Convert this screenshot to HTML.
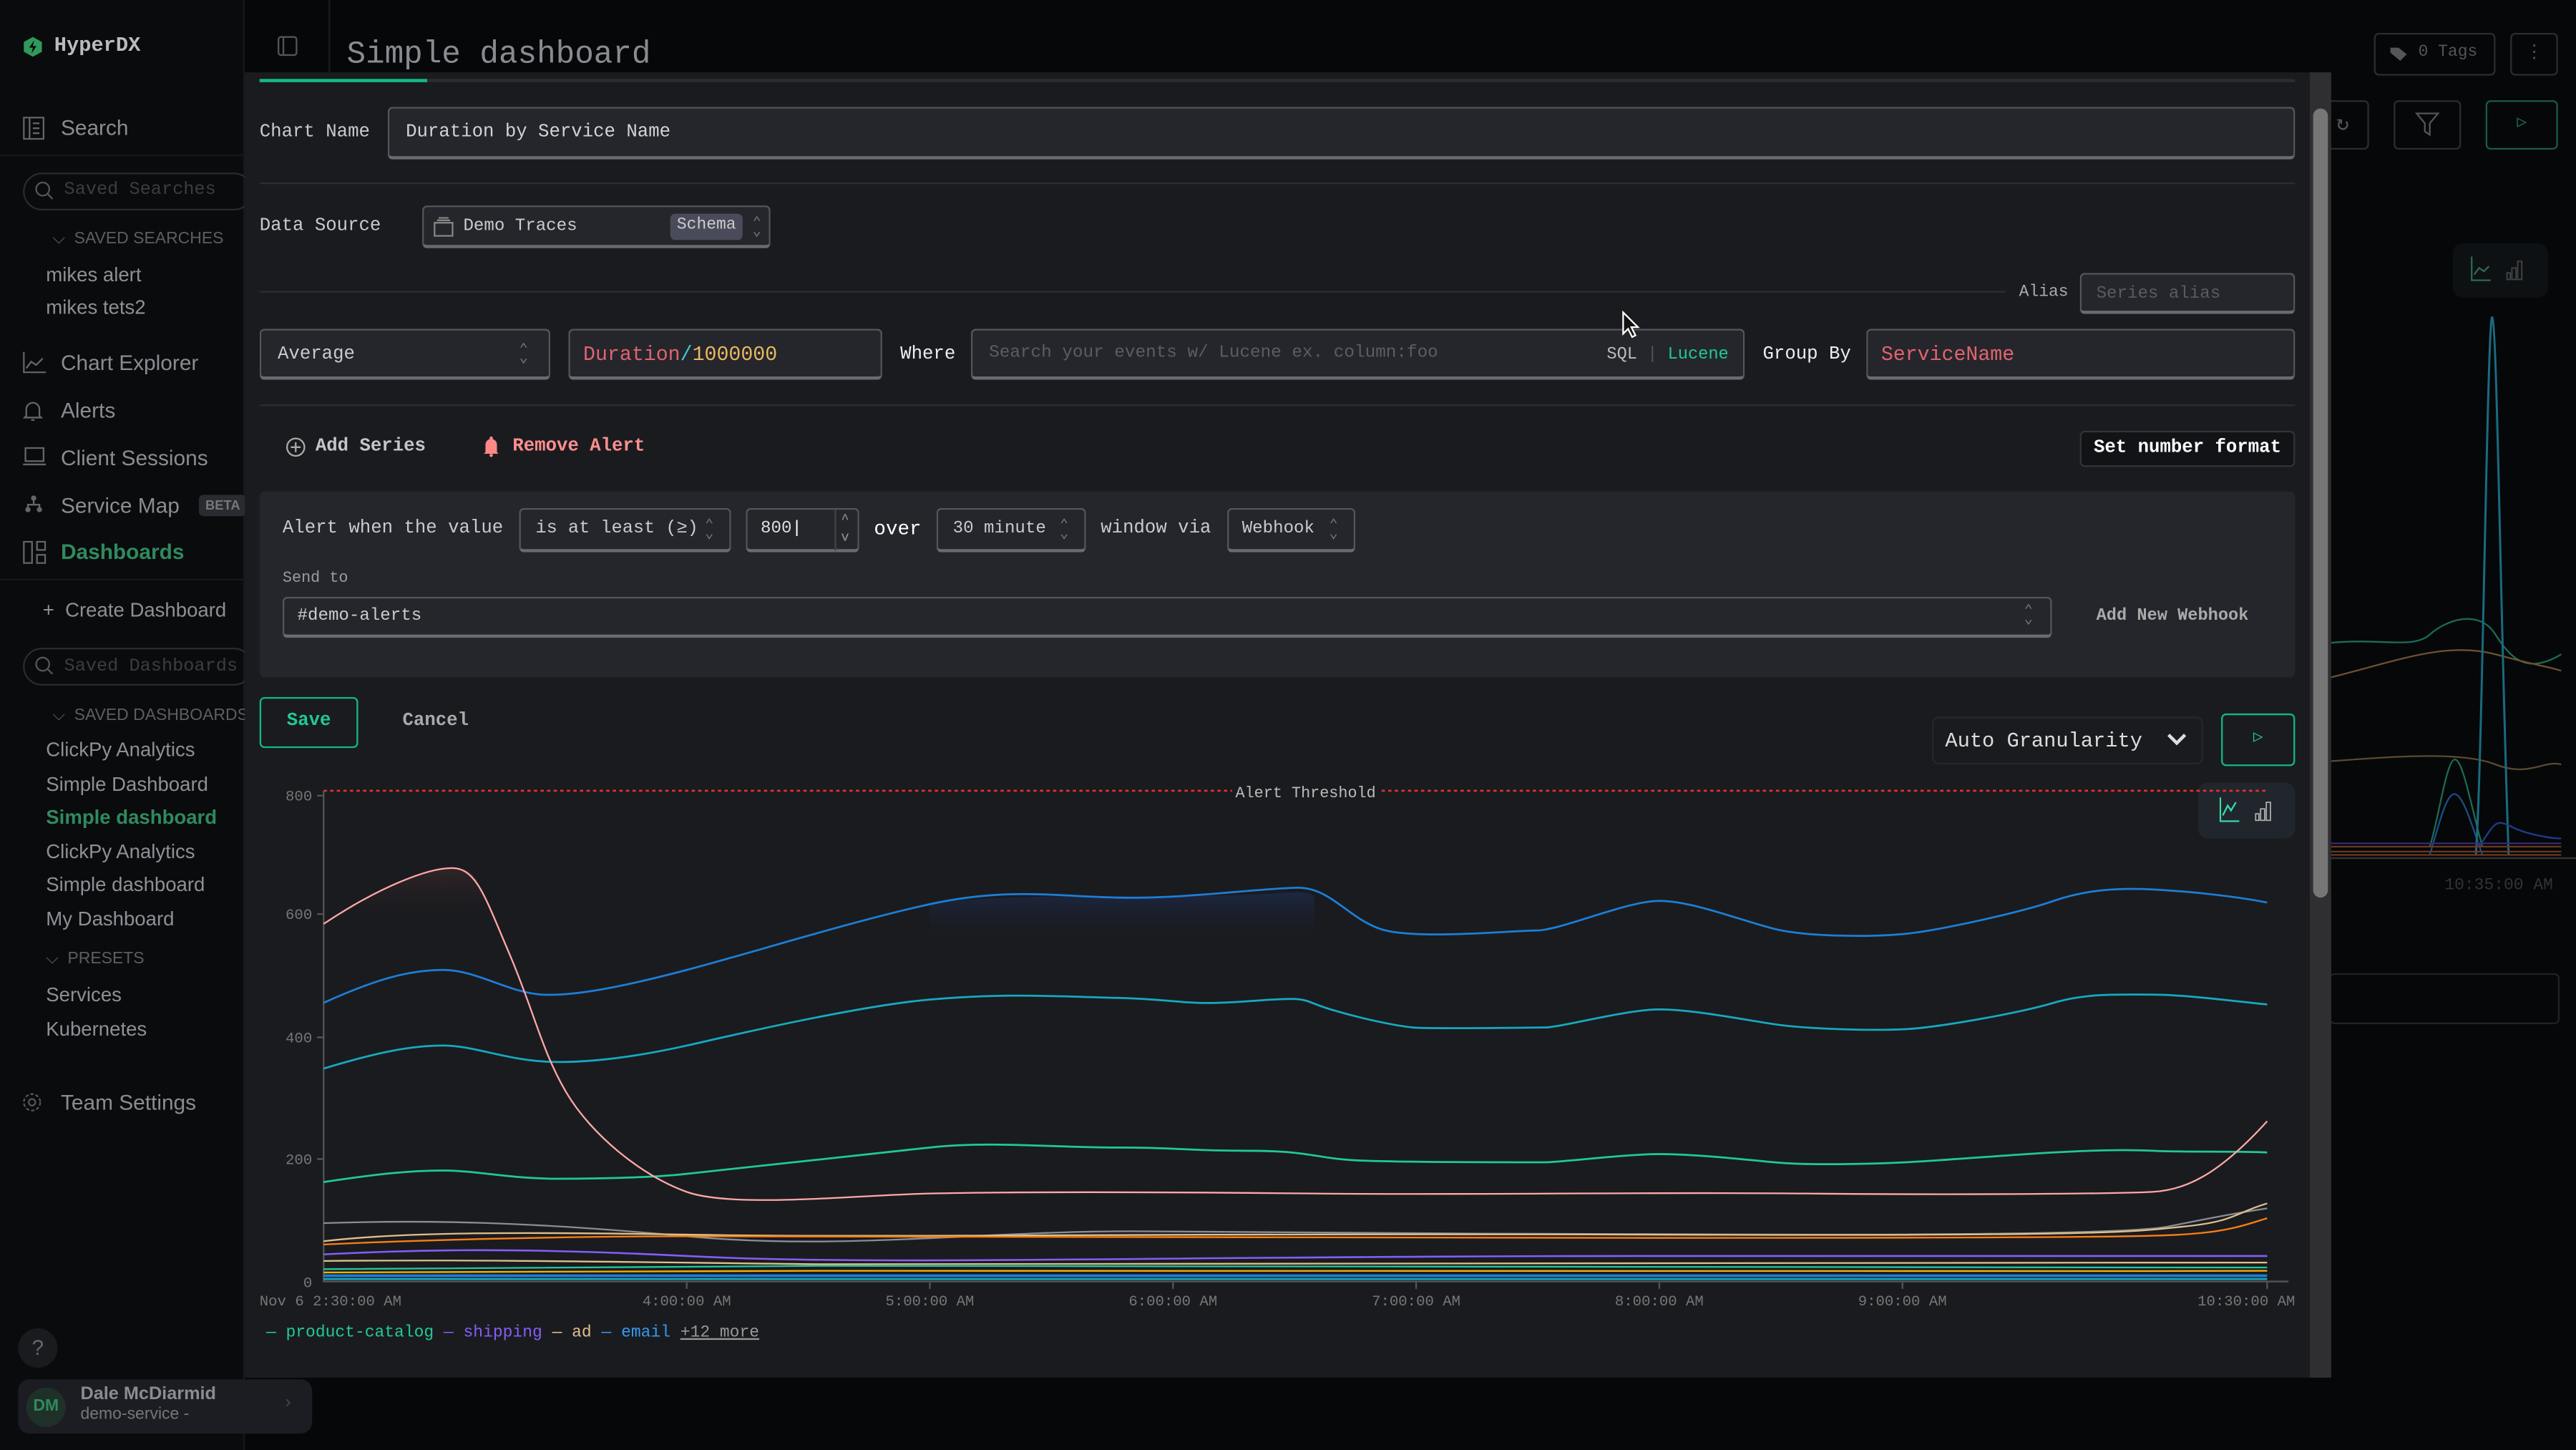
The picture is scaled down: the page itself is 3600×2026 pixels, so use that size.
<!DOCTYPE html>
<html><head><meta charset="utf-8">
<style>
*{box-sizing:border-box;margin:0;padding:0}
html,body{width:3600px;height:2026px;overflow:hidden;background:#050608}
#w{position:absolute;left:0;top:0;width:1568px;height:882px;transform:scale(2.29592,2.29705);transform-origin:0 0;background:#060709;font-family:"Liberation Mono",monospace;overflow:hidden}
.a{position:absolute;white-space:nowrap}
.inp{position:absolute;border:1px solid #55565c;border-bottom:2px solid #6a6b72;border-radius:3px;background:#25262b}
.lbl{color:#c9cacf;font-size:11.2px}
.nav{color:#8a8c92;font-size:13px;font-family:"Liberation Sans",sans-serif}
.sub{color:#8e9096;font-size:12px;font-family:"Liberation Sans",sans-serif}
.chev{color:#777;font-size:9px;line-height:5px}
</style></head><body><div id="w">
<!-- sidebar -->
<div class="a" style="left:0;top:0;width:149px;height:882px;background:#0a0b0d;border-right:1px solid #17181b"></div>
<div class="a" style="left:149px;top:0;width:52px;height:44px;background:#060709;border-right:1px solid #1b1c1f"></div>
<svg class="a" style="left:14px;top:22px" width="12" height="13" viewBox="0 0 12 13"><path d="M6 0.5L11.5 3.5V9.5L6 12.5L0.5 9.5V3.5Z" fill="#2f9a5a"/><path d="M6.8 2.5L3.8 7H6L5.2 10.5L8.2 6H6Z" fill="#0a0b0d"/></svg>
<div class="a" style="left:33px;top:21px;font-size:12.5px;font-weight:bold;color:#b9bbc0">HyperDX</div>
<div class="a" style="left:169px;top:22px;width:12px;height:12px;border:1px solid #555;border-radius:2px"></div>
<div class="a" style="left:172px;top:23px;width:1px;height:10px;background:#555"></div>
<svg class="a" style="left:14px;top:71px" width="13" height="14"><rect x="0.5" y="0.5" width="12" height="13" fill="none" stroke="#666"/><path d="M4 1V13M6 4H10M6 7H10M6 10H10" stroke="#666"/></svg>
<div class="a nav" style="left:37px;top:70px">Search</div>
<div class="a" style="left:0;top:94px;width:149px;height:1px;background:#17181b"></div>
<div class="a" style="left:14px;top:105px;width:140px;height:23px;border:1px solid #2a2b30;border-radius:12px"></div>
<svg class="a" style="left:21px;top:110px" width="12" height="12"><circle cx="5" cy="5" r="4" fill="none" stroke="#555"/><path d="M8 8L11 11" stroke="#555"/></svg>
<div class="a" style="left:39px;top:110px;color:#3c3d42;font-size:11px">Saved Searches</div>
<div class="a sub" style="left:32px;top:140px;font-size:10px;color:#5c5e63">⌵&nbsp; SAVED SEARCHES</div>
<div class="a sub" style="left:28px;top:160px">mikes alert</div>
<div class="a sub" style="left:28px;top:180px">mikes tets2</div>
<svg class="a" style="left:14px;top:214px" width="14" height="13"><path d="M0.5 0V12.5H14M2 10L5 6L8 8L12 4" fill="none" stroke="#666"/></svg>
<div class="a nav" style="left:37px;top:213px">Chart Explorer</div>
<svg class="a" style="left:14px;top:243px" width="12" height="14"><path d="M2 10V6A4 4 0 0 1 10 6V10L11 11H1Z M5 12.5H7" fill="none" stroke="#666"/></svg>
<div class="a nav" style="left:37px;top:242px">Alerts</div>
<svg class="a" style="left:14px;top:272px" width="14" height="12"><rect x="1.5" y="0.5" width="11" height="8" fill="none" stroke="#666"/><path d="M0 10.5H14" stroke="#666"/></svg>
<div class="a nav" style="left:37px;top:271px">Client Sessions</div>
<svg class="a" style="left:15px;top:301px" width="11" height="11"><circle cx="5.5" cy="2" r="1.6" fill="#666"/><circle cx="2" cy="9" r="1.6" fill="#666"/><circle cx="9" cy="9" r="1.6" fill="#666"/><path d="M5.5 3V6M2 8V6H9V8" stroke="#666" fill="none"/></svg>
<div class="a nav" style="left:37px;top:300px">Service Map</div>
<div class="a" style="left:121px;top:301px;background:#2a2b30;color:#777;font-size:8px;font-weight:bold;padding:2px 4px;border-radius:3px;font-family:'Liberation Sans'">BETA</div>
<svg class="a" style="left:14px;top:329px" width="14" height="14"><rect x="0.5" y="0.5" width="5" height="13" fill="none" stroke="#666"/><rect x="8.5" y="0.5" width="5" height="5" fill="none" stroke="#666"/><rect x="8.5" y="8.5" width="5" height="5" fill="none" stroke="#666"/></svg>
<div class="a nav" style="left:37px;top:328px;color:#2f8a5f;font-weight:bold">Dashboards</div>
<div class="a" style="left:0;top:352px;width:149px;height:1px;background:#17181b"></div>
<div class="a sub" style="left:26px;top:364px;color:#8e9096">+&nbsp; Create Dashboard</div>
<div class="a" style="left:14px;top:394px;width:140px;height:23px;border:1px solid #2a2b30;border-radius:12px"></div>
<svg class="a" style="left:21px;top:399px" width="12" height="12"><circle cx="5" cy="5" r="4" fill="none" stroke="#555"/><path d="M8 8L11 11" stroke="#555"/></svg>
<div class="a" style="left:39px;top:400px;color:#3c3d42;font-size:11px">Saved Dashboards</div>
<div class="a sub" style="left:32px;top:430px;font-size:10px;color:#5c5e63">⌵&nbsp; SAVED DASHBOARDS</div>
<div class="a sub" style="left:28px;top:449px">ClickPy Analytics</div>
<div class="a sub" style="left:28px;top:470px">Simple Dashboard</div>
<div class="a sub" style="left:28px;top:490px;color:#2f8a5f;font-weight:bold">Simple dashboard</div>
<div class="a sub" style="left:28px;top:511px">ClickPy Analytics</div>
<div class="a sub" style="left:28px;top:531px">Simple dashboard</div>
<div class="a sub" style="left:28px;top:552px">My Dashboard</div>
<div class="a sub" style="left:28px;top:578px;font-size:10px;color:#5c5e63">⌵&nbsp; PRESETS</div>
<div class="a sub" style="left:28px;top:598px">Services</div>
<div class="a sub" style="left:28px;top:619px">Kubernetes</div>
<svg class="a" style="left:13px;top:664px" width="13" height="13"><circle cx="6.5" cy="6.5" r="2" fill="none" stroke="#555"/><circle cx="6.5" cy="6.5" r="5" fill="none" stroke="#555" stroke-dasharray="2,1.2"/></svg>
<div class="a nav" style="left:37px;top:663px">Team Settings</div>
<div class="a" style="left:11px;top:808px;width:24px;height:24px;border-radius:12px;background:#1a1b1e;color:#666;font-size:13px;text-align:center;line-height:24px;font-family:'Liberation Sans'">?</div>
<div class="a" style="left:11px;top:839px;width:179px;height:33px;border-radius:7px;background:#1c1d22"></div>
<div class="a" style="left:16px;top:844px;width:24px;height:24px;border-radius:12px;background:#1f3028;color:#2f8a5f;font-size:10px;font-weight:bold;text-align:center;line-height:24px;font-family:'Liberation Sans'">DM</div>
<div class="a" style="left:49px;top:842px;color:#8a8c92;font-size:11px;font-weight:bold;font-family:'Liberation Sans'">Dale McDiarmid</div>
<div class="a" style="left:49px;top:855px;color:#777;font-size:10px;font-family:'Liberation Sans'">demo-service -</div>
<div class="a" style="left:172px;top:848px;color:#444;font-size:11px">›</div>
<!-- header -->
<div class="a" style="left:211px;top:22px;color:#8a8b90;font-size:19.3px">Simple dashboard</div>
<div class="a" style="left:1445px;top:20px;width:74px;height:26px;border:1px solid #2c2d31;border-radius:3px;color:#555;font-size:10px;line-height:24px;padding-left:26px">0 Tags</div>
<svg class="a" style="left:1454px;top:28px" width="12" height="10"><path d="M1 1H6L11 5L7 9L1 4Z" fill="#555"/></svg>
<div class="a" style="left:1528px;top:20px;width:29px;height:26px;border:1px solid #2c2d31;border-radius:3px;color:#555;font-size:11px;text-align:center;line-height:24px">⋮</div>
<div class="a" style="left:1410px;top:61px;width:32px;height:30px;border:1px solid #2c2d31;border-radius:3px;color:#555;text-align:center;line-height:28px;font-size:13px">↻</div>
<div class="a" style="left:1457px;top:61px;width:41px;height:30px;border:1px solid #2c2d31;border-radius:3px"></div>
<svg class="a" style="left:1470px;top:67px" width="16" height="18"><path d="M1 2H14L9 8V15L6 13V8Z" fill="none" stroke="#555"/></svg>
<div class="a" style="left:1513px;top:61px;width:44px;height:30px;border:1px solid #1b5a44;border-radius:3px;color:#1f7a5a;text-align:center;line-height:28px;font-size:10px">▷</div>
<!-- bg chart right -->
<div class="a" style="left:1493px;top:148px;width:58px;height:33px;border-radius:6px;background:#0e1113"></div>
<svg class="a" style="left:1504px;top:156px" width="36" height="16"><path d="M0.5 0V14.5H12M2 11L5 7L8 9L11 6" fill="none" stroke="#2f6a50"/><rect x="22" y="10" width="2" height="4" fill="none" stroke="#444" stroke-width="0.8"/><rect x="25" y="7" width="2.5" height="7" fill="none" stroke="#444" stroke-width="0.8"/><rect x="28.5" y="3" width="2.5" height="11" fill="none" stroke="#444" stroke-width="0.8"/></svg>
<svg class="a" style="left:1419px;top:180px" width="149" height="450">
<g fill="none" stroke-width="1">
<path d="M0 211C30 208 50 215 60 206S90 190 100 206S120 230 140 218" stroke="#1d6b58"/>
<path d="M0 232C40 222 70 210 100 218S130 225 140 228" stroke="#6b5330"/>
<path d="M0 283C40 280 80 277 100 285S130 282 140 285" stroke="#5b4a30"/>
<path d="M60 335C65 320 70 283 75 282S85 310 92 335" stroke="#1c6b50"/>
<path d="M60 340C66 320 70 303 75 303S85 320 92 340" stroke="#1d4d8a"/>
<path d="M88 340C92 290 95 10 98 13S103 200 108 340" stroke="#1a6b80" stroke-width="1.3"/>
<path d="M90 335C100 320 100 318 110 323S135 330 140 330" stroke="#1d3e8a"/>
<path d="M0 335H140M0 338H140M0 340H140" stroke="#6b3a20"/>
<path d="M0 333H140" stroke="#3a2a70"/>
<path d="M0 342H150" stroke="#333"/>
</g></svg>
<div class="a" style="left:1488px;top:534px;color:#333;font-size:10px">10:35:00 AM</div>
<div class="a" style="left:1418px;top:592px;width:140px;height:31px;border:1px solid #222;border-radius:3px"></div>
<!-- modal -->
<div class="a" style="left:149px;top:44px;width:1270px;height:794px;background:#1a1b1f"></div>
<div class="a" style="left:1406px;top:44px;width:13px;height:794px;background:#2f2f31"></div>
<div class="a" style="left:1408px;top:66px;width:9px;height:480px;background:#767676;border-radius:5px"></div>
<div class="a" style="left:158px;top:48px;width:1239px;height:2px;background:#2c2d31"></div>
<div class="a" style="left:158px;top:48px;width:102px;height:2px;background:#12b886"></div>
<div class="a lbl" style="left:158px;top:75px">Chart Name</div>
<div class="inp" style="left:236px;top:65px;width:1161px;height:32px"></div>
<div class="a lbl" style="left:247px;top:75px;color:#d2d3d7">Duration by Service Name</div>
<div class="a" style="left:158px;top:111px;width:1239px;height:1px;background:#2c2d31"></div>
<div class="a lbl" style="left:158px;top:132px">Data Source</div>
<div class="inp" style="left:257px;top:125px;width:212px;height:26px"></div>
<svg class="a" style="left:264px;top:132px" width="12" height="12"><rect x="0.5" y="3.5" width="11" height="8" fill="none" stroke="#888"/><path d="M2 2H10M3 0.5H9" stroke="#888"/></svg>
<div class="a" style="left:282px;top:132px;font-size:10.5px;color:#ccc">Demo Traces</div>
<div class="a" style="left:408px;top:130px;width:44px;height:16px;background:#4a4b5a;border-radius:3px;color:#ccc;font-size:10px;text-align:center;line-height:16px">Schema</div>
<div class="a chev" style="left:458px;top:134px">⌃<br>⌄</div>
<div class="a" style="left:158px;top:177px;width:1063px;height:1px;background:#2c2d31"></div>
<div class="a" style="left:1229px;top:173px;font-size:10px;color:#aaa">Alias</div>
<div class="inp" style="left:1266px;top:166px;width:131px;height:25px"></div>
<div class="a" style="left:1276px;top:173px;font-size:10.5px;color:#5a5b60">Series alias</div>
<div class="inp" style="left:158px;top:200px;width:177px;height:31px"></div>
<div class="a lbl" style="left:169px;top:210px">Average</div>
<div class="a chev" style="left:316px;top:211px">⌃<br>⌄</div>
<div class="inp" style="left:346px;top:200px;width:191px;height:31px"></div>
<div class="a" style="left:355px;top:209px;font-size:12.3px;color:#e0636e">Duration<span style="color:#3bc9db">/</span><span style="color:#e8b860">1000000</span></div>
<div class="a" style="left:548px;top:210px;font-size:11.2px;color:#eee">Where</div>
<div class="inp" style="left:591px;top:200px;width:471px;height:31px"></div>
<div class="a" style="left:602px;top:209px;font-size:10.6px;color:#5c5d62">Search your events w/ Lucene ex. column:foo</div>
<div class="a" style="left:978px;top:210px;font-size:10.3px;color:#bbb">SQL <span style="color:#555">|</span> <span style="color:#20c997">Lucene</span></div>
<div class="a" style="left:1073px;top:210px;font-size:11.2px;color:#eee">Group By</div>
<div class="inp" style="left:1136px;top:200px;width:261px;height:31px"></div>
<div class="a" style="left:1145px;top:209px;font-size:12.3px;color:#e0636e">ServiceName</div>
<svg class="a" style="left:987px;top:189px" width="12" height="18"><path d="M1 1V14L4 11L6.5 16L8.5 15L6 10H10Z" fill="#111" stroke="#fff" stroke-width="1"/></svg>
<div class="a" style="left:158px;top:246px;width:1239px;height:1px;background:#2c2d31"></div>
<svg class="a" style="left:174px;top:266px" width="12" height="12"><circle cx="6" cy="6" r="5.3" fill="none" stroke="#aaa"/><path d="M6 3V9M3 6H9" stroke="#aaa"/></svg>
<div class="a" style="left:192px;top:266px;font-size:11.2px;font-weight:bold;color:#c4c5ca">Add Series</div>
<svg class="a" style="left:294px;top:265px" width="10" height="13"><path d="M1.5 10V5.5A3.5 3.5 0 0 1 8.5 5.5V10L9.5 11H0.5Z" fill="#ff8787"/><circle cx="5" cy="12" r="1" fill="#ff8787"/><circle cx="5" cy="1.5" r="1" fill="#ff8787"/></svg>
<div class="a" style="left:312px;top:266px;font-size:11.2px;font-weight:bold;color:#ff8f8f">Remove Alert</div>
<div class="a" style="left:1266px;top:262px;width:131px;height:22px;border:1px solid #333;border-radius:3px;background:#121316;color:#fff;font-size:11.2px;font-weight:bold;text-align:center;line-height:20px">Set number format</div>
<div class="a" style="left:158px;top:299px;width:1239px;height:113px;background:#25262b;border-radius:3px"></div>
<div class="a lbl" style="left:172px;top:316px">Alert when the value</div>
<div class="inp" style="left:316px;top:309px;width:129px;height:27px"></div>
<div class="a" style="left:326px;top:316px;font-size:11px;color:#c9cacf">is at least (≥)</div>
<div class="a chev" style="left:429px;top:318px">⌃<br>⌄</div>
<div class="inp" style="left:454px;top:309px;width:69px;height:27px"></div>
<div class="a" style="left:463px;top:316px;font-size:10.5px;color:#ddd">800<span style="color:#fff">|</span></div>
<div class="a" style="left:508px;top:310px;width:1px;height:25px;background:#444"></div>
<div class="a" style="left:512px;top:311px;font-size:8px;color:#999;line-height:11px">^<br>v</div>
<div class="a" style="left:532px;top:315px;font-size:12px;color:#fff">over</div>
<div class="inp" style="left:570px;top:309px;width:91px;height:27px"></div>
<div class="a" style="left:580px;top:316px;font-size:10.5px;color:#c9cacf">30 minute</div>
<div class="a chev" style="left:645px;top:318px">⌃<br>⌄</div>
<div class="a lbl" style="left:670px;top:316px">window via</div>
<div class="inp" style="left:747px;top:309px;width:78px;height:27px"></div>
<div class="a" style="left:756px;top:316px;font-size:10.5px;color:#c9cacf">Webhook</div>
<div class="a chev" style="left:809px;top:318px">⌃<br>⌄</div>
<div class="a" style="left:172px;top:346px;font-size:9.5px;color:#9a9ba0">Send to</div>
<div class="inp" style="left:172px;top:363px;width:1077px;height:25px"></div>
<div class="a" style="left:181px;top:369px;font-size:10.5px;color:#ccc">#demo-alerts</div>
<div class="a chev" style="left:1232px;top:370px">⌃<br>⌄</div>
<div class="a" style="left:1276px;top:369px;font-size:10.3px;font-weight:bold;color:#aaa">Add New Webhook</div>
<div class="a" style="left:158px;top:424px;width:60px;height:31px;border:1px solid #12b886;border-radius:3px;color:#20c997;font-size:11.2px;font-weight:bold;text-align:center;line-height:29px">Save</div>
<div class="a" style="left:245px;top:433px;font-size:11.2px;font-weight:bold;color:#aaa">Cancel</div>
<div class="a" style="left:1176px;top:436px;width:165px;height:29px;border:1px solid #26272b;border-radius:4px;background:#1a1b1f"></div>
<div class="a" style="left:1184px;top:444px;font-size:12.5px;color:#ddd">Auto Granularity</div>
<svg class="a" style="left:1319px;top:446px" width="12" height="8"><path d="M1 1L6 6L11 1" fill="none" stroke="#ddd" stroke-width="2"/></svg>
<div class="a" style="left:1352px;top:434px;width:45px;height:32px;border:1.5px solid #12b886;border-radius:3px;color:#20c997;text-align:center;line-height:29px;font-size:10px">▷</div>
<div class="a" style="left:1338px;top:476px;width:59px;height:34px;border-radius:6px;background:#21262d"></div>
<svg class="a" style="left:1351px;top:485px" width="36" height="16"><path d="M0.5 0V14.5H12M2 11L5 5L7 8L10 3" fill="none" stroke="#38d9a9"/><rect x="22" y="10" width="2" height="4" fill="none" stroke="#aaa" stroke-width="0.8"/><rect x="25" y="7" width="2.5" height="7" fill="none" stroke="#aaa" stroke-width="0.8"/><rect x="28.5" y="3" width="2.5" height="11" fill="none" stroke="#aaa" stroke-width="0.8"/></svg>
<!-- chart -->
<svg class="a" style="left:149px;top:470px" width="1260" height="340" viewBox="149 470 1260 340">
<defs><linearGradient id="g1" x1="0" y1="0" x2="0" y2="1"><stop offset="0" stop-color="#3a2a2a" stop-opacity=".7"/><stop offset="1" stop-color="#1a1b1f" stop-opacity="0"/></linearGradient>
<linearGradient id="g2" x1="0" y1="0" x2="0" y2="1"><stop offset="0" stop-color="#1c2a4a" stop-opacity=".8"/><stop offset="1" stop-color="#1a1b1f" stop-opacity="0"/></linearGradient></defs>
<path d="M197 562C230 540 260 528 275 528S290 535 300 555 L300 560 H197Z" fill="url(#g1)"/>
<path d="M566 550C600 545 640 545 714 545S790 540 800 545L800 575H566Z" fill="url(#g2)"/>
<line x1="197" y1="481" x2="1380" y2="481" stroke="#e03131" stroke-dasharray="2,2" stroke-width="1.2"/>
<rect x="750" y="475" width="90" height="12" fill="#1a1b1f"/>
<text x="752" y="485" font-family="Liberation Mono" font-size="9.5" fill="#bbb">Alert Threshold</text>
<line x1="197" y1="481" x2="197" y2="780" stroke="#555"/>
<line x1="197" y1="779.5" x2="1393" y2="779.5" stroke="#555"/>
<g font-family="Liberation Mono" font-size="9" fill="#777" text-anchor="end">
<text x="190" y="487">800</text><text x="190" y="559">600</text><text x="190" y="634">400</text><text x="190" y="708">200</text><text x="190" y="783">0</text></g>
<g stroke="#555"><path d="M193 484H197M193 556H197M193 631H197M193 705H197M418 780V784M566 780V784M714 780V784M862 780V784M1010 780V784M1158 780V784M1380 780V784"/></g>
<g font-family="Liberation Mono" font-size="9" fill="#777" text-anchor="middle">
<text x="158" y="794" text-anchor="start">Nov 6 2:30:00 AM</text><text x="418" y="794">4:00:00 AM</text><text x="566" y="794">5:00:00 AM</text><text x="714" y="794">6:00:00 AM</text><text x="862" y="794">7:00:00 AM</text><text x="1010" y="794">8:00:00 AM</text><text x="1158" y="794">9:00:00 AM</text><text x="1397" y="794" text-anchor="end">10:30:00 AM</text></g>
<g fill="none" stroke-width="1.2">
<path d="M197 610C230 595 250 590 270 590S310 604 330 605S380 600 418 590S520 560 566 550S640 545 680 546S770 540 790 540S820 558 840 565S920 566 935 566S990 548 1010 548S1060 560 1080 565S1140 570 1160 568S1230 555 1250 548S1290 540 1310 541S1360 545 1380 549" stroke="#1c7ed6"/>
<path d="M197 650C230 640 250 636 270 636S310 646 340 646S400 640 418 636S520 612 566 608S640 606 680 607S720 612 760 609S790 608 810 614S850 624 860 625S930 625 940 625S990 614 1010 614S1060 620 1080 623S1140 627 1160 626S1230 616 1250 610S1290 605 1310 605S1360 609 1380 611" stroke="#15aabf"/>
<path d="M197 719C230 714 250 712 270 712S310 717 340 717S400 716 418 714S530 702 566 698S640 698 680 698S720 700 760 700S800 705 830 706S930 707 940 707S990 702 1010 702S1060 705 1080 707S1140 708 1160 707S1230 702 1250 701S1290 699 1310 700S1360 700 1380 701" stroke="#20c997"/>
<path d="M197 562C230 540 260 528 275 528S295 545 310 580S330 640 345 665S390 715 418 725S520 727 566 726S700 725 800 726S1000 725 1100 726S1290 726 1310 725S1350 715 1380 682" stroke="#ffa8a8" stroke-width="1"/>
<path d="M197 744C260 742 320 743 418 752S600 748 700 749S1000 751 1100 751S1300 750 1320 746S1360 738 1380 735" stroke="#868e96" stroke-width="1"/>
<path d="M197 755C240 750 300 749 418 751S700 750 1000 751S1300 749 1330 746S1360 738 1380 732" stroke="#e0c08a" stroke-width="1"/>
<path d="M197 757C260 754 350 752 418 752S700 753 1000 753S1320 752 1340 750S1370 744 1380 741" stroke="#fd7e14" stroke-width="1"/>
<path d="M197 763C240 761 300 758 418 764S700 764 1000 764S1380 764 1380 764" stroke="#845ef7" stroke-width="1.1"/>
<path d="M197 767C300 766 400 768 500 769S1000 768 1380 768" stroke="#e0c08a" stroke-width="1"/>
<path d="M197 772C300 771 400 771 500 770S1000 771 1380 771" stroke="#20c997" stroke-width="1"/>
<path d="M197 774C300 773 400 773 500 773S1000 774 1380 773" stroke="#fab005" stroke-width="1"/>
<path d="M197 776H1380" stroke="#1c7ed6" stroke-width="1.6"/>
<path d="M197 778H1380" stroke="#15aabf" stroke-width="1.2"/>
</g></svg>
<div class="a" style="left:162px;top:806px;font-size:10px;color:#20c997">— product-catalog <span style="color:#845ef7">— shipping</span> <span style="color:#e0c08a">— ad</span> <span style="color:#339af0">— email</span> <span style="color:#999;text-decoration:underline">+12 more</span></div>
</div></body></html>
